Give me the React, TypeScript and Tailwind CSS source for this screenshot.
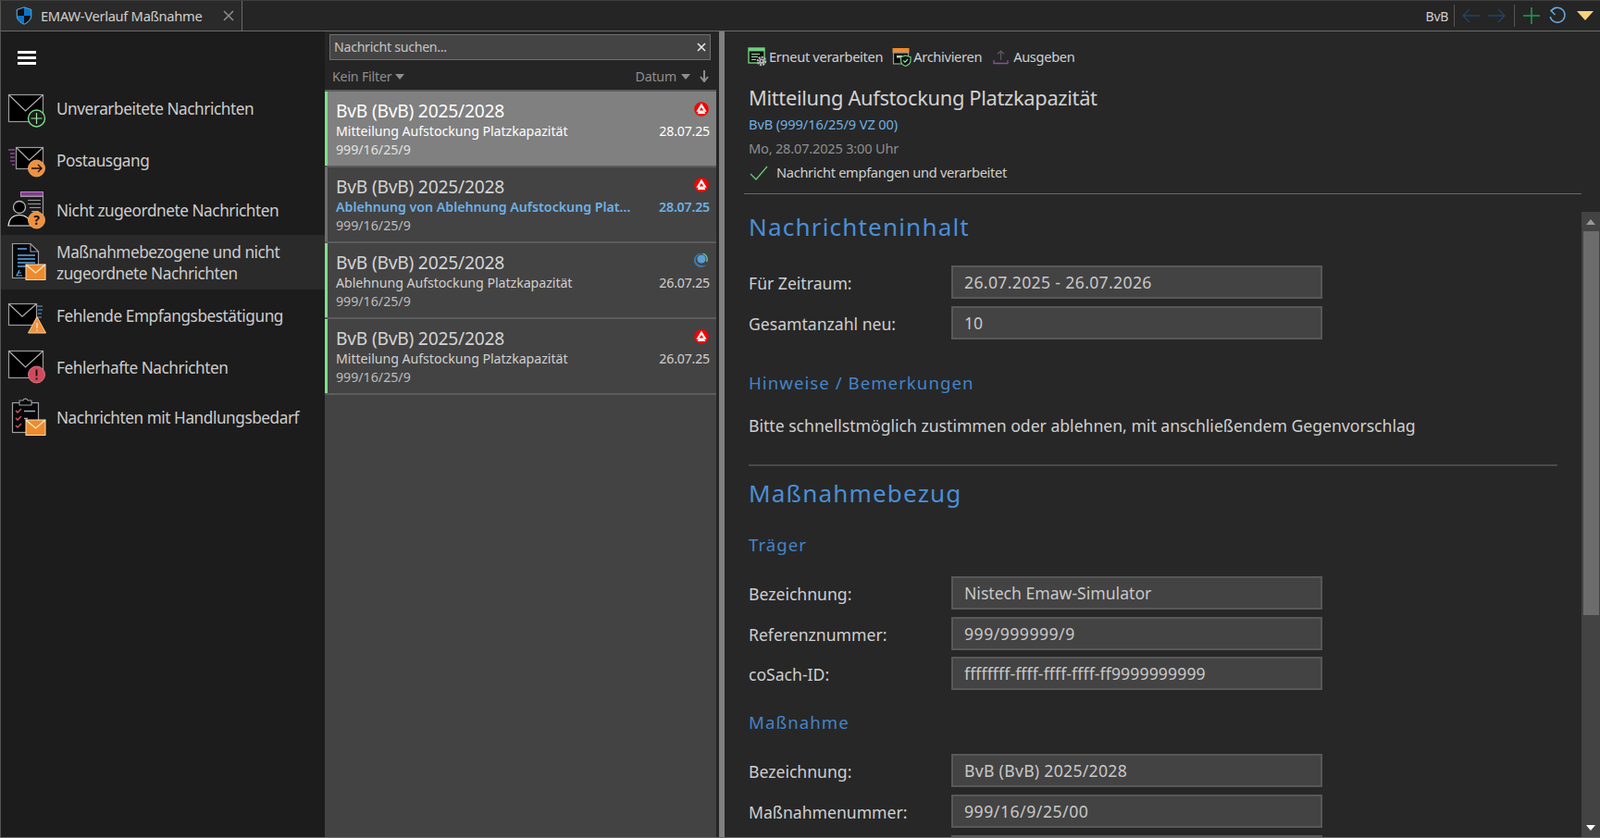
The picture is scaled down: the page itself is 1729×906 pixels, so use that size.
import React from "react";

const F = "font-['Open_Sans','Noto_Sans',sans-serif]";

function Shield() {
  return (
    <svg width="18" height="20" viewBox="0 0 18 20">
      <path d="M9 0.8 L16.8 3.4 V10 C16.8 14.6 13 17.7 9 19.2 C5 17.7 1.2 14.6 1.2 10 V3.4 Z" fill="#0b74c8" stroke="#8cc4ee" strokeWidth="0.7" />
      <path d="M9 1.6 L2 3.9 V10 H9 Z" fill="#0c1014" />
      <path d="M9 10 H16 C15.7 14 12.6 17 9 18.4 Z" fill="#0c1014" />
    </svg>
  );
}

function Envelope({ x, y, w, h }: { x: number; y: number; w: number; h: number }) {
  return (
    <g>
      <rect x={x + 0.5} y={y + 0.5} width={w} height={h} fill="#000" stroke="#9b9b9b" strokeWidth="1.2" />
      <path d={`M${x + 0.5} ${y + 0.5} L${x + w / 2} ${y + h * 0.62} L${x + w + 0.5} ${y + 0.5}`} fill="none" stroke="#b0b0b0" strokeWidth="1.2" />
    </g>
  );
}

function OrangeMail({ x = 20, y = 24 }: { x?: number; y?: number }) {
  return (
    <g>
      <rect x={x} y={y} width="21" height="16.5" fill="#ee8a2d" stroke="#f6e2b8" strokeWidth="1" />
      <path d={`M${x} ${y} L${x + 10.5} ${y + 9} L${x + 21} ${y}`} fill="none" stroke="#fbeed2" strokeWidth="1.2" />
    </g>
  );
}

function NavIcon({ kind }: { kind: string }) {
  return (
    <svg width="44" height="44" viewBox="0 0 44 44" className="shrink-0">
      {kind === "new" && (
        <g>
          <Envelope x={1} y={6} w={37} h={29} />
          <circle cx="31.5" cy="32" r="9" fill="#1c1c1c" stroke="#7edc8c" strokeWidth="1.4" />
          <path d="M31.5 26 V38 M25.5 32 H37.5" stroke="#9be8a4" strokeWidth="1.2" />
        </g>
      )}
      {kind === "out" && (
        <g>
          <Envelope x={9} y={8} w={29} h={23} />
          <path d="M1 11 H8 M3 15 H8 M3 19 H8 M3 23 H8 M5 27 H8" stroke="#c05cc8" strokeWidth="1.2" />
          <circle cx="31.5" cy="31" r="9" fill="#f0913f" stroke="#f3b27a" strokeWidth="0.8" />
          <path d="M26 31 H37 M33 27 L37 31 L33 35" fill="none" stroke="#111" strokeWidth="1.3" />
        </g>
      )}
      {kind === "unassigned" && (
        <g>
          <rect x="14.5" y="1.5" width="24" height="4.5" fill="#7b3f85" stroke="#c77bd0" strokeWidth="1" />
          <path d="M14 6.5 H38.5 V28 M22 10.5 H36 M22 14.5 H36 M24 18.5 H36 M26 22.5 H34" fill="none" stroke="#9a9a9a" strokeWidth="1.2" />
          <circle cx="13" cy="18" r="6.5" fill="#000" stroke="#b5b5b5" strokeWidth="1.3" />
          <path d="M1 38 C2 29 8 26.5 13 26.5 C18 26.5 24 29 25 38 Z" fill="#000" stroke="#e8e8e8" strokeWidth="1.2" />
          <circle cx="31.5" cy="32" r="9" fill="#f0913f" stroke="#f3b27a" strokeWidth="0.8" />
          <text x="31.5" y="37" textAnchor="middle" fontSize="14" fontFamily="Open Sans, sans-serif" fontWeight="700" fill="#111">?</text>
        </g>
      )}
      {kind === "doc" && (
        <g>
          <path d="M5.5 1.5 H25 L33.5 10 V38.5 H5.5 Z" fill="#05070a" stroke="#a0a0a0" strokeWidth="1.2" />
          <path d="M25 1.5 V10 H33.5" fill="none" stroke="#a0a0a0" strokeWidth="1.1" />
          <path d="M11 7 H21 M11 14 H30 M11 18 H30 M11 22 H30 M11 26 H26" stroke="#62a8e4" strokeWidth="1.3" />
          <path d="M13 30 L10 36 H16 M11 33 H15" fill="none" stroke="#62a8e4" strokeWidth="1.2" />
          <OrangeMail />
        </g>
      )}
      {kind === "missing" && (
        <g>
          <Envelope x={1} y={8} w={30} h={23} />
          <path d="M32 11 H38 M33 15 H38 M33 19 H37 M33 23 H37" stroke="#5f9fd6" strokeWidth="1.2" />
          <path d="M32 22.5 L41.5 40 H22.5 Z" fill="#f0913f" stroke="#f7d09a" strokeWidth="1" />
          <path d="M32 29 V35 M32 36.5 V38" stroke="#f3d0b0" strokeWidth="1.6" />
        </g>
      )}
      {kind === "error" && (
        <g>
          <Envelope x={1} y={4} w={37} h={29} />
          <circle cx="31.5" cy="30" r="9" fill="#d04a5c" stroke="#e88a96" strokeWidth="0.8" />
          <path d="M31.5 24.5 V31.5 M31.5 33.5 V35.5" stroke="#111" strokeWidth="1.8" />
        </g>
      )}
      {kind === "todo" && (
        <g>
          <rect x="5.5" y="5.5" width="28" height="32" fill="#05070a" stroke="#a0a0a0" strokeWidth="1.2" />
          <path d="M13 5.5 V3 H17 C17.5 0.5 21.5 0.5 22 3 H26 V8 H13 Z" fill="#05070a" stroke="#a0a0a0" strokeWidth="1.1" />
          <path d="M9 14 L11 16 L15 12 M9 22 L11 24 L15 20 M9 30 L11 32 L15 28" fill="none" stroke="#e0555f" strokeWidth="1.3" />
          <path d="M18 14.5 H30 M18 22.5 H22" stroke="#a8a8a8" strokeWidth="1.3" />
          <OrangeMail />
        </g>
      )}
    </svg>
  );
}

function BaIcon() {
  return (
    <svg width="16" height="16" viewBox="0 0 16 16">
      <circle cx="8" cy="8" r="7.8" fill="#f60000" />
      <path d="M8 1.6 L13.6 10.8 H11 L8 6 L5 10.8 H2.4 Z" fill="#fff" />
      <path d="M5.6 9.6 H10.4 L12.4 13 H3.6 Z" fill="#fff" />
      <path d="M6.9 8.4 H9.1 L8 6.4 Z" fill="#f60000" />
    </svg>
  );
}

function RingIcon() {
  return (
    <svg width="18" height="18" viewBox="0 0 18 18">
      <path d="M11 1 A7.6 7.6 0 1 0 15.4 13.2 C11.5 15 5.5 14.4 4 9.5 C3 5.5 6.5 1.5 11 1 Z" fill="#3d79ad" />
      <circle cx="10" cy="7" r="4.6" fill="#5a9fd4" />
      <path d="M11.6 1.3 A6.2 6.2 0 0 1 15.6 10" fill="none" stroke="#6fc08c" strokeWidth="1.4" />
    </svg>
  );
}

const navItems: { kind: string; h: string; lines: string[]; active?: boolean }[] = [
  { kind: "new", h: "h-[55px]", lines: ["Unverarbeitete Nachrichten"] },
  { kind: "out", h: "h-[56px]", lines: ["Postausgang"] },
  { kind: "unassigned", h: "h-[53px]", lines: ["Nicht zugeordnete Nachrichten"] },
  { kind: "doc", h: "h-[59px]", lines: ["Maßnahmebezogene und nicht", "zugeordnete Nachrichten"], active: true },
  { kind: "missing", h: "h-[57px]", lines: ["Fehlende Empfangsbestätigung"] },
  { kind: "error", h: "h-[54px]", lines: ["Fehlerhafte Nachrichten"] },
  { kind: "todo", h: "h-[55px]", lines: ["Nachrichten mit Handlungsbedarf"] },
];

function Nav() {
  return (
    <aside className="w-[351px] shrink-0 bg-[#1c1c1c] border-l border-l-[#555555] flex flex-col">
      <div className="h-[56px] pl-[18px] flex flex-col justify-center gap-[3px]">
        <div className="w-[20px] h-[3px] bg-white" />
        <div className="w-[20px] h-[3px] bg-white" />
        <div className="w-[20px] h-[3px] bg-white" />
      </div>
      {navItems.map((n) => (
        <div key={n.kind} className={`${n.h} flex items-center pl-[7px] ${n.active ? "bg-[#2a2a2a]" : ""}`}>
          <NavIcon kind={n.kind} />
          <div className="ml-[9px] pt-[1px] text-[17.2px] leading-[23.5px] tracking-[-0.44px] text-[#cdcdcd] whitespace-nowrap">
            {n.lines.map((l) => (
              <div key={l}>{l}</div>
            ))}
          </div>
        </div>
      ))}
    </aside>
  );
}

const messages = [
  { icon: "ba", sub: "Mitteilung Aufstockung Platzkapazität", date: "28.07.25", selected: true, bar: "bg-[#7fe08a]" },
  { icon: "ba", sub: "Ablehnung von Ablehnung Aufstockung Plat...", date: "28.07.25", unread: true, bar: "bg-[#6e6e6e]" },
  { icon: "ring", sub: "Ablehnung Aufstockung Platzkapazität", date: "26.07.25", bar: "bg-[#7fe08a]" },
  { icon: "ba", sub: "Mitteilung Aufstockung Platzkapazität", date: "26.07.25", bar: "bg-[#7fe08a]" },
];

function MessageRow({ m }: { m: (typeof messages)[number] }) {
  const tone = m.unread ? "text-[#6fb0e4] font-semibold" : m.selected ? "text-white" : "text-[#d0d0d0]";
  return (
    <div className={`h-[82px] flex border-b-2 border-b-[#5c5c5c] ${m.selected ? "bg-[#808080]" : "bg-[#434343]"}`}>
      <div className={`w-[2.5px] shrink-0 ${m.bar}`} />
      <div className="flex-1 min-w-0 pl-[9.5px] pr-[7px] pt-[8px]">
        <div className="flex justify-between items-center h-[26px]">
          <span className={`text-[19.2px] tracking-[-0.2px] whitespace-nowrap ${m.selected ? "text-white" : "text-[#d4d4d4]"}`}>BvB (BvB) 2025/2028</span>
          <span className="mr-[1px] mt-[-5px] flex">{m.icon === "ba" ? <BaIcon /> : <RingIcon />}</span>
        </div>
        <div className="flex justify-between items-center h-[21px] mt-[-2px]">
          <span className={`text-[14.2px] whitespace-nowrap ${m.unread ? "tracking-[0px]" : "tracking-[-0.05px]"} ${tone}`}>{m.sub}</span>
          <span className={`text-[14.2px] tracking-[-0.2px] ${tone}`}>{m.date}</span>
        </div>
        <div className={`mt-[1px] text-[14.2px] leading-[18px] tracking-[0px] ${m.selected ? "text-[#e2e2e2]" : "text-[#bcbcbc]"}`}>999/16/25/9</div>
      </div>
    </div>
  );
}

function ListPane() {
  return (
    <section className="w-[423px] shrink-0 flex flex-col bg-[#252525]">
      <div className="pl-[5px] pt-[3px] pr-[6px]">
        <div className="h-[28px] border border-[#6e6e6e] bg-[#444444] flex items-center justify-between pl-[4px] pr-[3px]">
          <span className="text-[14.2px] tracking-[-0.3px] text-[#c4c4c4]">Nachricht suchen...</span>
          <svg width="12" height="12" viewBox="0 0 12 12">
            <path d="M2 2 L10 10 M10 2 L2 10" stroke="#e8e8e8" strokeWidth="1.6" />
          </svg>
        </div>
      </div>
      <div className="h-[32px] pt-[4px] flex items-center justify-between pl-[8px] pr-[8px] text-[14.2px] tracking-[-0.2px] text-[#8e8e8e]">
        <div className="flex items-center gap-[4px]">
          <span>Kein Filter</span>
          <svg width="10" height="6" viewBox="0 0 10 6"><path d="M0 0 H10 L5 6 Z" fill="#8e8e8e" /></svg>
        </div>
        <div className="flex items-center gap-[5px]">
          <span>Datum</span>
          <svg width="10" height="6" viewBox="0 0 10 6"><path d="M0 0 H10 L5 6 Z" fill="#8e8e8e" /></svg>
          <svg width="10" height="13" viewBox="0 0 10 13" className="ml-[5px]"><path d="M5 0 V11 M1 7 L5 12 L9 7" fill="none" stroke="#8e8e8e" strokeWidth="2" /></svg>
        </div>
      </div>
      <div className="flex-1 bg-[#434343] border-t-2 border-t-[#5c5c5c]">
        {messages.map((m, i) => (
          <MessageRow key={i} m={m} />
        ))}
      </div>
    </section>
  );
}

function Field({ label, value, tracking = "tracking-[0px]" }: { label: string; value: string; tracking?: string }) {
  return (
    <div className="flex items-center h-[36px]">
      <div className="w-[219px] shrink-0 text-[17.6px] tracking-[0px] text-[#cfcfcf] pt-[2px]">{label}</div>
      <div className={`w-[401px] h-[36px] shrink-0 bg-[#434343] border-2 border-[#585858] flex items-center pl-[12px] text-[17.6px] ${tracking} text-[#c8c8c8] whitespace-nowrap`}>
        {value}
      </div>
    </div>
  );
}

function Toolbar() {
  return (
    <div className="h-[37px] flex items-center text-[14.6px] tracking-[-0.3px] text-[#cfcfcf] whitespace-nowrap">
      <svg width="21" height="21" viewBox="0 0 21 21" className="ml-[1px]">
        <rect x="1" y="1" width="17" height="16" fill="#0b0b0b" stroke="#6fcf7f" strokeWidth="1.4" />
        <rect x="1" y="1" width="17" height="3.4" fill="#6fcf7f" />
        <path d="M4 7.5 H13 M4 10.5 H11 M4 13.5 H9" stroke="#9fdca8" strokeWidth="1" />
        <circle cx="15" cy="15" r="4" fill="none" stroke="#b5b5b5" strokeWidth="2.6" strokeDasharray="2 1" />
        <circle cx="15" cy="15" r="2.6" fill="#b5b5b5" />
        <circle cx="15" cy="15" r="1" fill="#272727" />
      </svg>
      <span className="ml-[2px]">Erneut verarbeiten</span>
      <svg width="21" height="21" viewBox="0 0 21 21" className="ml-[10px]">
        <rect x="0.5" y="1" width="18" height="5" fill="#ee8a2d" />
        <rect x="1.5" y="6" width="16" height="12" fill="#0b0b0b" stroke="#9b9b9b" strokeWidth="1.2" />
        <rect x="5" y="9" width="6" height="2.5" fill="#c8c8c8" />
        <path d="M14.5 9 L20 10.8 V14.5 C20 17.5 17 19.5 14.5 20.5 C12 19.5 9.5 17.5 9.5 14.5 V10.8 Z" fill="#111" stroke="#6fcf7f" strokeWidth="1.2" />
        <path d="M12.3 14.5 L14 16.2 L17 13" fill="none" stroke="#9fe8a8" strokeWidth="1.1" />
      </svg>
      <span className="ml-[2px]">Archivieren</span>
      <svg width="18" height="18" viewBox="0 0 18 18" className="ml-[12px]">
        <path d="M1 12 V15.5 H16 V12" fill="none" stroke="#8d4f96" strokeWidth="1.3" />
        <path d="M8.5 12 V2 M5 5.5 L8.5 2 L12 5.5" fill="none" stroke="#5c5c5c" strokeWidth="1.2" />
      </svg>
      <span className="ml-[4px]">Ausgeben</span>
    </div>
  );
}

function H1({ children }: { children: React.ReactNode }) {
  return <h2 className="text-[26px] leading-[36px] font-normal tracking-[1.2px] text-[#4a8fd8] whitespace-nowrap">{children}</h2>;
}
function H2({ children }: { children: React.ReactNode }) {
  return <h3 className="text-[18.6px] leading-[26px] font-normal tracking-[1.05px] text-[#4583c8] whitespace-nowrap">{children}</h3>;
}

function DetailPane() {
  return (
    <section className="flex-1 min-w-0 flex flex-col bg-[#272727] overflow-hidden">
      <div className="pl-[21px] pt-[9px] h-[175px] shrink-0 flex flex-col">
        <div className="pl-[3px]">
          <Toolbar />
        </div>
        <div className="pl-[5px] mt-[11px]">
          <div className="text-[21.85px] leading-[30px] tracking-[-0.32px] text-[#d2d2d2] whitespace-nowrap">Mitteilung Aufstockung Platzkapazität</div>
          <div className="text-[14.6px] leading-[20px] mt-[3px] tracking-[-0.1px] text-[#6fb0e4]">BvB (999/16/25/9 VZ 00)</div>
          <div className="text-[14.6px] leading-[20px] mt-[6px] tracking-[-0.2px] text-[#8e8e8e]">Mo, 28.07.2025 3:00 Uhr</div>
          <div className="flex items-center mt-[6px] h-[22px]">
            <svg width="20" height="16" viewBox="0 0 20 16" className="ml-[1px]"><path d="M1 9 L7 15 L19 1" fill="none" stroke="#6cc77a" strokeWidth="1.3" /></svg>
            <span className="ml-[9px] text-[14.6px] tracking-[-0.3px] text-[#cfcfcf]">Nachricht empfangen und verarbeitet</span>
          </div>
        </div>
      </div>
      <div className="ml-[21px] mr-[20px] border-t border-t-[#6a6a6a]" />
      <div className="flex-1 min-h-0 flex">
        <div className="flex-1 min-w-0 pl-[26px] pr-[26px] pt-[17px] overflow-hidden">
          <H1>Nachrichteninhalt</H1>
          <div className="mt-[24px] flex flex-col gap-[8px]">
            <Field label="Für Zeitraum:" value="26.07.2025 - 26.07.2026" tracking="tracking-[0.35px]" />
            <Field label="Gesamtanzahl neu:" value="10" />
          </div>
          <div className="mt-[34px]">
            <H2>Hinweise / Bemerkungen</H2>
          </div>
          <p className="mt-[20px] text-[17.6px] leading-[26px] tracking-[0px] text-[#cfcfcf] whitespace-nowrap">
            Bitte schnellstmöglich zustimmen oder ablehnen, mit anschließendem Gegenvorschlag
          </p>
          <div className="mt-[29px] border-t-2 border-t-[#484848]" />
          <div className="mt-[11px]">
            <H1>Maßnahmebezug</H1>
          </div>
          <div className="mt-[25px]">
            <H2>Träger</H2>
          </div>
          <div className="mt-[21px] flex flex-col gap-[8px]">
            <Field label="Bezeichnung:" value="Nistech Emaw-Simulator" />
            <div className="flex flex-col gap-[7px]">
              <Field label="Referenznummer:" value="999/999999/9" tracking="tracking-[0.5px]" />
              <Field label="coSach-ID:" value="ffffffff-ffff-ffff-ffff-ff9999999999" tracking="tracking-[0.12px]" />
            </div>
          </div>
          <div className="mt-[22px]">
            <H2>Maßnahme</H2>
          </div>
          <div className="mt-[21px] flex flex-col gap-[8px]">
            <Field label="Bezeichnung:" value="BvB (BvB) 2025/2028" tracking="tracking-[0.3px]" />
            <Field label="Maßnahmenummer:" value="999/16/9/25/00" tracking="tracking-[0.54px]" />
            <Field label="" value="" />
          </div>
        </div>
        <div className="w-[20px] shrink-0 mt-[19px] bg-[#434343] flex flex-col items-center">
          <div className="h-[21px] shrink-0 flex items-center justify-center">
            <svg width="10" height="6" viewBox="0 0 10 6"><path d="M5 0 L10 6 H0 Z" fill="#9a9a9a" /></svg>
          </div>
          <div className="h-[415px] w-[17px] shrink-0 bg-[#6c6c6c]" />
          <div className="flex-1" />
          <div className="h-[21px] shrink-0 flex items-center justify-center">
            <svg width="10" height="6" viewBox="0 0 10 6"><path d="M0 0 H10 L5 6 Z" fill="#ffffff" /></svg>
          </div>
        </div>
      </div>
    </section>
  );
}

function TopBar() {
  return (
    <header className="h-[34px] shrink-0 flex bg-[#252525] border-t border-t-[#3d3d3d] border-b border-b-[#6a6a6a] border-l border-l-[#555555]">
      <div className="w-[261px] flex items-center bg-[#2a2a2a] border-r border-r-[#6a6a6a] pl-[16px]">
        <Shield />
        <span className="ml-[9px] text-[14.7px] tracking-[-0.3px] text-[#cfcfcf] whitespace-nowrap">EMAW-Verlauf Maßnahme</span>
        <svg width="12" height="12" viewBox="0 0 12 12" className="ml-auto mr-[8px]">
          <path d="M1 1 L11 11 M11 1 L1 11" stroke="#8a8a8a" strokeWidth="1.6" />
        </svg>
      </div>
      <div className="flex-1 flex items-center justify-end pr-[7px]">
        <span className="text-[14px] tracking-[-0.3px] text-[#cfcfcf] mr-[6px]">BvB</span>
        <div className="w-px h-[24px] bg-[#555555]" />
        <svg width="20" height="16" viewBox="0 0 20 16" className="ml-[8px]"><path d="M19 8 H1 M8 1 L1 8 L8 15" fill="none" stroke="#1f4464" strokeWidth="1.4" /></svg>
        <svg width="20" height="16" viewBox="0 0 20 16" className="ml-[7px]"><path d="M1 8 H19 M12 1 L19 8 L12 15" fill="none" stroke="#1f4464" strokeWidth="1.4" /></svg>
        <div className="w-px h-[24px] bg-[#555555] ml-[9px]" />
        <svg width="20" height="20" viewBox="0 0 20 20" className="ml-[8px]"><path d="M10 1 V19 M1 10 H19" fill="none" stroke="#1f9d55" strokeWidth="1.5" /></svg>
        <svg width="20" height="20" viewBox="0 0 20 20" className="ml-[8px]">
          <path d="M3.5 4.5 A8 8 0 1 1 2.2 11" fill="none" stroke="#6aa9dc" strokeWidth="1.4" />
          <path d="M8 1 L3 4.5 L7.5 9" fill="none" stroke="#6aa9dc" strokeWidth="1.4" />
        </svg>
        <svg width="18" height="10" viewBox="0 0 18 10" className="ml-[11px]"><path d="M0 0 H18 L9 10 Z" fill="#f7d27c" /></svg>
      </div>
    </header>
  );
}

export default function App() {
  return (
    <div className={`w-screen h-screen overflow-hidden flex flex-col bg-[#1c1c1c] ${F}`}>
      <TopBar />
      <div className="flex-1 min-h-0 flex">
        <Nav />
        <ListPane />
        <div className="w-[3px] shrink-0 bg-[#252525]" />
        <div className="w-[6px] shrink-0 bg-[#808080]" />
        <DetailPane />
      </div>
      <div className="h-px shrink-0 bg-[#6a6a6a]" />
    </div>
  );
}
